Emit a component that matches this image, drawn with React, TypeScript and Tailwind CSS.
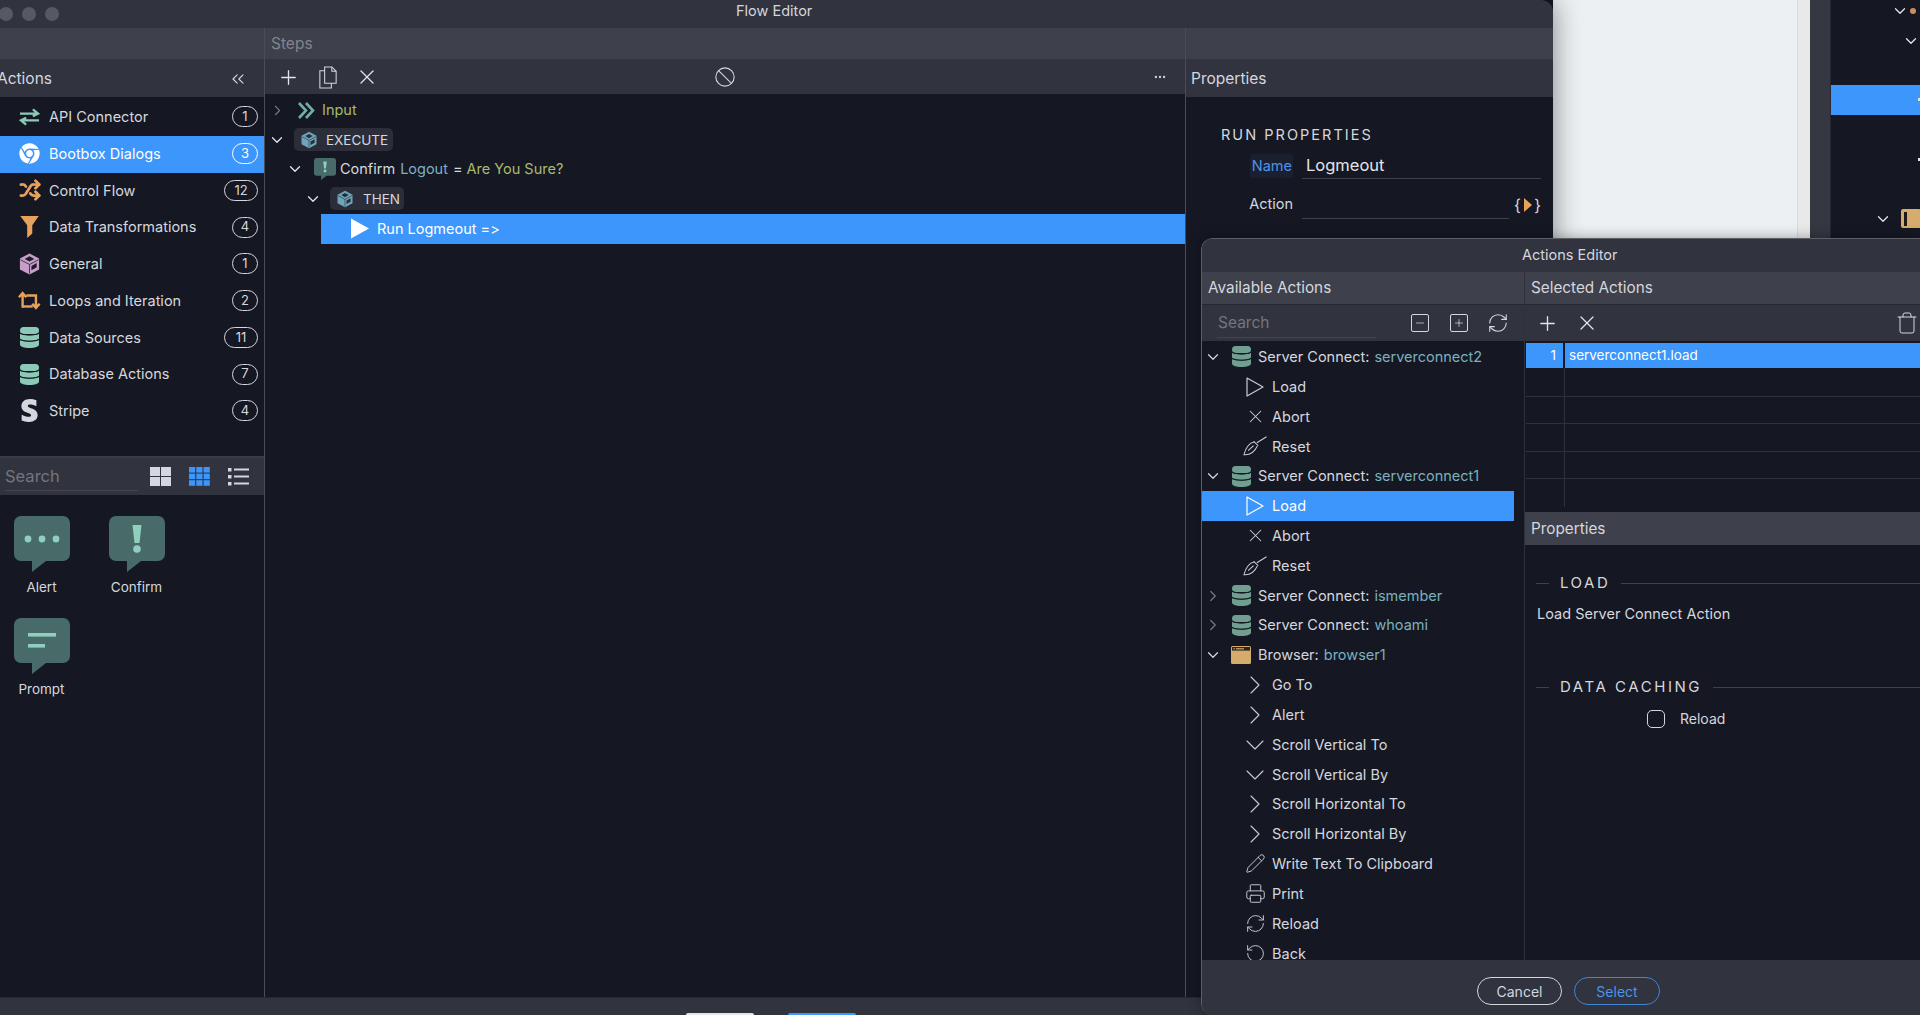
import { type ReactNode } from "react";
import {
  Ban,
  ChevronDown,
  ChevronRight,
  ChevronsLeft,
  Ellipsis,
  Minus,
  Pencil,
  Plus,
  Printer,
  RefreshCw,
  RotateCcw,
  Shuffle,
  Trash,
  X,
} from "lucide-react";
import { FaChrome, FaStripeS } from "react-icons/fa";

function Db({ color = "#8cc9b7" }: { color?: string }) {
  return (
    <svg viewBox="0 0 19 21" className="h-[21px] w-[19px]" fill={color}>
      <rect x="0" y="0" width="19" height="7" rx="3.5" />
      <path d="M0 6.8C3 9 16 9 19 6.8V11C19 13 15 14 9.5 14 4 14 0 13 0 11Z" />
      <path d="M0 13C3 15.2 16 15.2 19 13V17.5C19 19.8 15 21 9.5 21 4 21 0 19.8 0 17.5Z" />
      <path d="M0 6.2C3 8.4 16 8.4 19 6.2M0 12.4C3 14.6 16 14.6 19 12.4" fill="none" stroke="#151823" strokeWidth="1" />
    </svg>
  );
}

function Cube({ color, dark, className }: { color: string; dark: string; className: string }) {
  return (
    <svg viewBox="0 0 24 24" className={className}>
      <path d="M12 1 22 6.2V17.8L12 23 2 17.8V6.2Z" fill={color} />
      <path d="M12 4 17 6.8 12 9.5 7 6.8Z" fill={dark} />
      <path d="M12 12.5V22M12 12.5 21.5 7.5M12 12.5 2.5 7.5" stroke={dark} strokeWidth="0.8" fill="none" />
      <path d="M14 14 19.5 11V15.5L14 18.5Z" fill={dark} />
    </svg>
  );
}

function Funnel() {
  return (
    <svg viewBox="0 0 22 26" className="h-[24px] w-[21px]" fill="#e8a15b">
      <path d="M1 1H21L14 11V20L8.5 25V11Z" />
    </svg>
  );
}

function Swap() {
  return (
    <svg viewBox="0 0 22 18" className="h-[18px] w-[21px]" fill="none" stroke="#8cc9b7" strokeWidth="2.5">
      <path d="M1 5.5H20M14.5 1 20 5.5 14.5 8.2" />
      <path d="M21 12.5H2M7.5 9.8 2 12.5 7.5 17" />
    </svg>
  );
}

function Loop() {
  return (
    <svg viewBox="0 0 25 22" className="h-[21px] w-[25px]" fill="none" stroke="#e8a15b" strokeWidth="2.6">
      <path d="M5 19V3M1 7.5 5 3 9 7.5" />
      <path d="M9 5.5H19.5V19M15.5 14.5 19.5 19 23.5 14.5" />
      <path d="M5 17.5H16" />
    </svg>
  );
}

function Bubble({ kind, className }: { kind: "dots" | "bang" | "lines"; className: string }) {
  return (
    <svg viewBox="0 0 56 56" className={className}>
      <path
        d="M7 0H49a7 7 0 0 1 7 7V38a7 7 0 0 1-7 7H32L18 56V45H7a7 7 0 0 1-7-7V7a7 7 0 0 1 7-7Z"
        fill="#486a69"
      />
      {kind === "dots" && (
        <g fill="#8fcfbd">
          <circle cx="14" cy="23" r="3.4" />
          <circle cx="28" cy="23" r="3.4" />
          <circle cx="42" cy="23" r="3.4" />
        </g>
      )}
      {kind === "bang" && (
        <g fill="#8fcfbd">
          <path d="M23.5 9H32.5L30.5 27H25.5Z" />
          <circle cx="28" cy="33" r="3.8" />
        </g>
      )}
      {kind === "lines" && (
        <g fill="#8fcfbd">
          <rect x="14" y="15" width="28" height="3.6" />
          <rect x="14" y="26" width="17" height="3.6" />
        </g>
      )}
    </svg>
  );
}

function Brush() {
  return (
    <svg viewBox="0 0 26 21" className="h-[20px] w-[25px]" fill="none" stroke="#c9cbd2" strokeWidth="1.1">
      <path d="M25.5 0.5 15 7" />
      <path d="M11.5 5.5 16.5 10" />
      <path d="M12.5 6C7.5 7 3 12 1 20C7 20.5 12.5 17 15.5 10.5" />
      <path d="M11.5 10 5.5 15.5" />
    </svg>
  );
}

function Browser() {
  return (
    <svg viewBox="0 0 20 18" className="h-[18px] w-[20px]">
      <rect x="0" y="0" width="20" height="18" rx="1.5" fill="#d6ac6c" />
      <rect x="1" y="1" width="18" height="3.6" fill="#2a2622" />
      <rect x="2.5" y="2.2" width="1.4" height="1.2" fill="#d6ac6c" />
      <rect x="5" y="2.2" width="8" height="1.2" fill="#d6ac6c" />
    </svg>
  );
}

function Pages() {
  return (
    <svg viewBox="0 0 20 24" className="h-[23px] w-[20px]" fill="none" stroke="#d5d7de" strokeWidth="1.1">
      <path d="M6.5 1H14L18.5 5.5V18H6.5Z" />
      <path d="M14 1V5.5H18.5" />
      <path d="M6.5 5H1.5V23H13.5V18" />
    </svg>
  );
}

const thin = "h-[21px] w-[21px] text-[#c9cbd2]";
const bigRight = <ChevronRight className="h-[32px] w-[32px] shrink-0 text-[#c9cbd2]" strokeWidth={0.8} />;
const bigDown = <ChevronDown className="h-[32px] w-[32px] shrink-0 text-[#c9cbd2]" strokeWidth={0.8} />;

const categories: { name: string; count: number; icon: ReactNode; active?: boolean }[] = [
  { name: "API Connector", count: 1, icon: <Swap /> },
  { name: "Bootbox Dialogs", count: 3, icon: <FaChrome className="h-[21px] w-[21px] text-white" />, active: true },
  { name: "Control Flow", count: 12, icon: <Shuffle className="h-[22px] w-[22px] text-[#e8a15b]" strokeWidth={3} /> },
  { name: "Data Transformations", count: 4, icon: <Funnel /> },
  { name: "General", count: 1, icon: <Cube color="#c79ec9" dark="#1a1c27" className="h-[24px] w-[24px]" /> },
  { name: "Loops and Iteration", count: 2, icon: <Loop /> },
  { name: "Data Sources", count: 11, icon: <Db /> },
  { name: "Database Actions", count: 7, icon: <Db /> },
  { name: "Stripe", count: 4, icon: <FaStripeS className="h-[23px] w-[23px] text-[#d5d7de]" /> },
];

function CategoryRow({ name, count, icon, active }: (typeof categories)[number]) {
  return (
    <div className={`flex h-[36.75px] items-center pb-[1px] pl-[18px] pr-[6px] ${active ? "bg-[#3d96fb] text-white" : ""}`}>
      <span className="flex w-[23px] justify-center">{icon}</span>
      <span className="ml-[8px] flex-1">{name}</span>
      <span className={`flex h-[21px] items-center justify-center rounded-full border text-[13px] ${count > 9 ? "w-[34px]" : "w-[26px]"} ${active ? "border-white" : "border-[#d5d7de]"}`}>
        {count}
      </span>
    </div>
  );
}

function Tile({ label, kind }: { label: string; kind: "dots" | "bang" | "lines" }) {
  return (
    <div className="flex w-[95px] flex-col items-center">
      <Bubble kind={kind} className="h-[56px] w-[56px]" />
      <span className="mt-[6px] text-[13.5px] leading-[18px]">{label}</span>
    </div>
  );
}

function Head({ children, className = "" }: { children?: ReactNode; className?: string }) {
  return <div className={`flex h-[31px] shrink-0 items-center bg-[#3e404b] pt-[1px] text-[15.5px] ${className}`}>{children}</div>;
}

function ServerConnect({ name, open }: { name: string; open: boolean }) {
  return <TreeHead open={open} icon={<Db color="#709f92" />} label="Server Connect:" name={name} />;
}

function TreeHead({ open, icon, label, name }: { open: boolean; icon: ReactNode; label: string; name: string }) {
  return (
    <div className="flex h-[29.83px] items-center pl-[2px]">
      {open ? (
        <ChevronDown className="h-[18px] w-[18px] text-[#d5d7de]" strokeWidth={1.6} />
      ) : (
        <ChevronRight className="h-[18px] w-[18px] text-[#777983]" strokeWidth={1.6} />
      )}
      <span className="ml-[8px] flex w-[22px] justify-center">{icon}</span>
      <span className="ml-[6px]">{label}</span>
      <span className="ml-[5px] text-[#7cb0bd]">{name}</span>
    </div>
  );
}

function Leaf({ icon, label, active }: { icon: ReactNode; label: string; active?: boolean }) {
  return (
    <div className={`flex h-[29.83px] items-center pl-[41px] ${active ? "bg-[#3d96fb] text-white" : ""}`}>
      <span className="flex w-[24px] justify-center">{icon}</span>
      <span className="ml-[5px]">{label}</span>
    </div>
  );
}

function PlayOutline({ white }: { white?: boolean }) {
  return (
    <svg viewBox="0 0 18 20" className="h-[20px] w-[18px]" fill="none" stroke={white ? "#fff" : "#c9cbd2"} strokeWidth="1.2">
      <path d="M1 1 17 10 1 19Z" strokeLinejoin="round" />
    </svg>
  );
}

function SectionTitle({ title }: { title: string }) {
  return (
    <div className="flex items-center pl-[11px] text-[15px] leading-[20px] tracking-[0.17em] text-[#d5d7de]">
      <span className="h-px w-[13px] bg-[#3e404b]" />
      <span className="ml-[11px]">{title}</span>
      <span className="ml-[11px] h-px flex-1 bg-[#3e404b]" />
    </div>
  );
}

const sideRows = [
  { ml: 60, dot: true },
  { ml: 71 },
  {},
  { blue: true, speck: true },
  {},
  { speck: true },
  {},
  { ml: 43, box: true },
];

export default function App() {
  return (
    <div className="relative flex h-[1015px] w-[1920px] overflow-hidden bg-[#151823] text-[14.5px] text-[#d5d7de] [font-family:Inter,sans-serif] [font-feature-settings:'calt'_0]">
      {/* flow editor window */}
      <div className="z-10 flex h-full w-[1553px] shrink-0 flex-col overflow-hidden rounded-tr-xl bg-[#151823] shadow-[0_0_28px_rgba(0,0,0,0.45)]">
        <div className="flex h-[28px] shrink-0 items-center bg-[#31333e]">
          <div className="-ml-[1px] flex w-[60px] gap-[9px]">
            <span className="h-[14px] w-[14px] shrink-0 rounded-full bg-[#565862]" />
            <span className="h-[14px] w-[14px] shrink-0 rounded-full bg-[#565862]" />
            <span className="h-[14px] w-[14px] shrink-0 rounded-full bg-[#565862]" />
          </div>
          <span className="ml-[677px] -mt-[7px] text-[14.5px]">Flow Editor</span>
        </div>

        <div className="flex min-h-0 flex-1">
          {/* actions */}
          <div className="flex w-[265px] shrink-0 flex-col border-r border-[#4a4c56]">
            <Head />
            <div className="flex h-[38px] shrink-0 items-center justify-between bg-[#31333e] pr-[16px] pt-[1px] text-[15.5px]">
              <span className="-ml-[3px]">Actions</span>
              <ChevronsLeft className="h-[20px] w-[20px] text-[#d5d7de]" strokeWidth={1.4} />
            </div>
            <div className="pt-[2px]">
              {categories.map((c) => (
                <CategoryRow key={c.name} {...c} />
              ))}
            </div>
            <div className="mt-[26px] flex h-[39px] shrink-0 items-center border-t-2 border-[#3a3c46] bg-[#31333e] pl-[5px]">
              <span className="flex h-[30px] w-[133px] items-center border-b border-[#42444e] pt-[2px] text-[16.5px] text-[#74767f]">Search</span>
              <svg viewBox="0 0 21 19" className="ml-[12px] h-[19px] w-[21px]" fill="#d5d7de">
                <rect width="10" height="9" />
                <rect x="11" width="10" height="9" />
                <rect y="10" width="10" height="9" />
                <rect x="11" y="10" width="10" height="9" />
              </svg>
              <svg viewBox="0 0 21 19" className="ml-[18px] h-[19px] w-[21px]" fill="#3d96fb">
                {[0, 7.3, 14.6].map((x) =>
                  [0, 6.6, 13.2].map((y) => <rect key={`${x}-${y}`} x={x} y={y} width="6.2" height="5.6" />),
                )}
              </svg>
              <svg viewBox="0 0 21 19" className="ml-[18px] h-[19px] w-[21px]" fill="#d5d7de">
                <rect y="1" width="3.5" height="3.5" />
                <rect x="6" y="1.5" width="15" height="2" />
                <rect y="8" width="3.5" height="3.5" />
                <rect x="6" y="8.5" width="15" height="2" />
                <rect y="15" width="3.5" height="3.5" />
                <rect x="6" y="15.5" width="15" height="2" />
              </svg>
            </div>
            <div className="-ml-[6px] flex w-[210px] flex-wrap pt-[21px] text-[#d5d7de]">
              <Tile label="Alert" kind="dots" />
              <Tile label="Confirm" kind="bang" />
              <div className="mt-[22px]">
                <Tile label="Prompt" kind="lines" />
              </div>
            </div>
          </div>

          {/* steps */}
          <div className="flex w-[921px] shrink-0 flex-col border-r border-[#4a4c56]">
            <Head className="pl-[6px] text-[#82848d]">Steps</Head>
            <div className="flex h-[35px] shrink-0 items-center bg-[#31333e] pl-[12px] pr-[18px] pt-[1px]">
              <Plus className="h-[23px] w-[23px] text-[#e3e4e9]" strokeWidth={1.4} />
              <span className="ml-[18px] flex">
                <Pages />
              </span>
              <X className="ml-[17px] h-[24px] w-[24px] text-[#e3e4e9]" strokeWidth={1.3} />
              <Ban className="ml-[335px] h-[22px] w-[22px] text-[#d5d7de]" strokeWidth={1.2} />
              <Ellipsis className="ml-auto h-[14px] w-[14px] text-[#d5d7de]" />
            </div>
            <div className="pt-[1px]">
              <div className="flex h-[30px] items-center pl-[4px]">
                <ChevronRight className="h-[17px] w-[17px] text-[#777983]" strokeWidth={1.5} />
                <svg viewBox="0 0 17 17" className="ml-[12px] h-[17px] w-[17px]" fill="none" stroke="#6fb0a2" strokeWidth="2.6">
                  <path d="M1 1 8 8.5 1 16M8 1 15 8.5 8 16" />
                </svg>
                <span className="ml-[7px] text-[#a6b86e]">Input</span>
              </div>
              <div className="flex h-[29.5px] items-center pl-[3px]">
                <ChevronDown className="h-[18px] w-[18px] text-[#e3e4e9]" strokeWidth={1.7} />
                <span className="ml-[8px] flex h-[23px] w-[99px] items-center rounded-[5px] bg-[#2b2e39] pl-[6px] text-[13.5px]">
                  <Cube color="#6ea5bb" dark="#2b2e39" className="h-[18px] w-[18px]" />
                  <span className="ml-[8px]">EXECUTE</span>
                </span>
              </div>
              <div className="flex h-[29.5px] items-center pl-[21px]">
                <ChevronDown className="h-[18px] w-[18px] text-[#e3e4e9]" strokeWidth={1.7} />
                <Bubble kind="bang" className="ml-[10px] h-[22px] w-[22px]" />
                <span className="ml-[4px]">Confirm</span>
                <span className="ml-[5px] text-[#7cb0c4]">Logout</span>
                <span className="ml-[5px]">=</span>
                <span className="ml-[4px] text-[#abb96f]">Are You Sure?</span>
              </div>
              <div className="flex h-[29.5px] items-center pl-[39px]">
                <ChevronDown className="h-[18px] w-[18px] text-[#e3e4e9]" strokeWidth={1.7} />
                <span className="ml-[8px] flex h-[23px] w-[74px] items-center rounded-[5px] bg-[#2b2e39] pl-[6px] text-[13.5px]">
                  <Cube color="#6ea5bb" dark="#2b2e39" className="h-[18px] w-[18px]" />
                  <span className="ml-[9px]">THEN</span>
                </span>
              </div>
              <div className="ml-[56px] flex h-[30px] items-center bg-[#3d96fb] pl-[30px] text-white">
                <svg viewBox="0 0 18 20" className="h-[21px] w-[18px]" fill="#fff">
                  <path d="M0 0 18 10 0 20Z" />
                </svg>
                <span className="ml-[8px]">Run Logmeout =&gt;</span>
              </div>
            </div>
          </div>

          {/* properties */}
          <div className="flex min-w-0 flex-1 flex-col">
            <Head />
            <div className="flex h-[38px] shrink-0 items-center bg-[#31333e] pl-[5px] pt-[1px] text-[15.5px]">Properties</div>
            <div className="pl-[35px] pr-[12px] pt-[28px]">
              <div className="text-[14.5px] leading-[20px] tracking-[0.14em]">RUN PROPERTIES</div>
              <div className="mt-[7px] flex h-[27px] items-center">
                <span className="ml-[29px] flex h-[24px] w-[43px] items-center justify-end rounded-[2px] bg-[#1a2030] pr-[1px] text-[14.5px] text-[#4a94ea]">Name</span>
                <span className="ml-[9px] flex h-[27px] flex-1 items-center border-b border-[#3e404b] pl-[4px] text-[16.5px] text-[#e3e4e9]">Logmeout</span>
              </div>
              <div className="mt-[12px] flex h-[28px] items-center">
                <span className="ml-[27px] -mt-[2px] w-[45px] text-right text-[14.5px]">Action</span>
                <span className="ml-[9px] h-[28px] flex-1 border-b border-[#3e404b]" />
                <span className="ml-[5px] flex w-[27px] items-center justify-between text-[16px] leading-none">
                  {"{"}
                  <svg viewBox="0 0 8 14" className="h-[14px] w-[8px]" fill="#e8a15b">
                    <path d="M0 0 8 7 0 14Z" />
                  </svg>
                  {"}"}
                </span>
              </div>
            </div>
          </div>
        </div>

        <div className="flex h-[18px] shrink-0 items-end border-t border-[#262832] bg-[#31333e] pl-[686px]">
          <span className="h-[2px] w-[68px] rounded-t-sm bg-[#e3e4e9]" />
          <span className="ml-[34px] h-[2px] w-[68px] rounded-t-sm bg-[#3d96fb]" />
        </div>
      </div>

      {/* page behind the windows */}
      <div className="w-[244px] shrink-0 bg-[#ecf0f3]" />
      <div className="w-[13px] shrink-0 border-l border-[#d8dadb] bg-[#e9e9e9]" />
      <div className="w-[21px] shrink-0 border-r border-[#262832] bg-[#353741]" />
      <div className="-mt-[4px] flex min-w-0 flex-1 flex-col bg-[#151823]">
        {sideRows.map((r, i) => (
          <div key={i} className={`flex h-[29.7px] shrink-0 items-center ${r.blue ? "bg-[#3d96fb]" : ""}`}>
            {r.ml !== undefined && (
              <ChevronDown style={{ marginLeft: r.ml }} className="h-[18px] w-[18px] shrink-0 text-[#e3e4e9]" strokeWidth={1.7} />
            )}
            {r.dot && <span className="ml-[1px] h-[6px] w-[6px] shrink-0 rounded-full bg-[#c88f5a]" />}
            {r.box && (
              <span className="ml-[9px] flex h-[19px] w-[20px] shrink-0 items-center rounded-[2px] bg-[#d6ac6c] pl-[3px]">
                <span className="h-[14px] w-[3px] bg-[#1d1b19]" />
              </span>
            )}
            {r.speck && <span className="ml-auto h-[3px] w-[2px] shrink-0 bg-[#e3e4e9]" />}
          </div>
        ))}
      </div>

      {/* actions editor dialog */}
      <div className="absolute left-[1201px] top-[238px] z-20 flex h-[777px] w-[719px] flex-col overflow-hidden rounded-l-xl border-l border-t border-[#5c5e68] bg-[#151823] shadow-[0_0_14px_rgba(0,0,0,0.35)]">
        <div className="flex h-[33px] shrink-0 items-center bg-[#31333e] pb-[2px] pl-[320px] text-[14.5px]">Actions Editor</div>
        <div className="flex min-h-0 flex-1">
          <div className="flex w-[323px] shrink-0 flex-col border-r border-[#2e303a]">
            <div className="flex h-[33px] shrink-0 items-center border-b border-[#262832] bg-[#3e404b] pl-[6px] pt-[1px] text-[15.3px]">Available Actions</div>
            <div className="flex h-[36px] shrink-0 items-center bg-[#31333e] pl-[15px]">
              <span className="flex h-[30px] w-[159px] items-center border-b border-[#42444e] pl-[1px] text-[15.5px] text-[#74767f]">Search</span>
              <span className="ml-[35px] flex h-[18px] w-[18px] items-center justify-center rounded-[2px] border border-[#d5d7de]">
                <Minus className="h-[12px] w-[12px]" strokeWidth={1.5} />
              </span>
              <span className="ml-[21px] flex h-[18px] w-[18px] items-center justify-center rounded-[2px] border border-[#d5d7de]">
                <Plus className="h-[12px] w-[12px]" strokeWidth={1.5} />
              </span>
              <RefreshCw className="ml-[19px] h-[22px] w-[22px]" strokeWidth={1.2} />
            </div>
            <div className="min-h-0 flex-1 overflow-hidden pr-[10px] pt-[1px]">
              <ServerConnect name="serverconnect2" open />
              <Leaf icon={<PlayOutline />} label="Load" />
              <Leaf icon={<X className={thin} strokeWidth={1.2} />} label="Abort" />
              <Leaf icon={<Brush />} label="Reset" />
              <ServerConnect name="serverconnect1" open />
              <Leaf icon={<PlayOutline white />} label="Load" active />
              <Leaf icon={<X className={thin} strokeWidth={1.2} />} label="Abort" />
              <Leaf icon={<Brush />} label="Reset" />
              <ServerConnect name="ismember" open={false} />
              <ServerConnect name="whoami" open={false} />
              <TreeHead open icon={<Browser />} label="Browser:" name="browser1" />
              <Leaf icon={bigRight} label="Go To" />
              <Leaf icon={bigRight} label="Alert" />
              <Leaf icon={bigDown} label="Scroll Vertical To" />
              <Leaf icon={bigDown} label="Scroll Vertical By" />
              <Leaf icon={bigRight} label="Scroll Horizontal To" />
              <Leaf icon={bigRight} label="Scroll Horizontal By" />
              <Leaf icon={<Pencil className={thin} strokeWidth={1.1} />} label="Write Text To Clipboard" />
              <Leaf icon={<Printer className={thin} strokeWidth={1.1} />} label="Print" />
              <Leaf icon={<RefreshCw className={thin} strokeWidth={1.1} />} label="Reload" />
              <Leaf icon={<RotateCcw className={thin} strokeWidth={1.1} />} label="Back" />
            </div>
          </div>

          <div className="flex min-w-0 flex-1 flex-col">
            <div className="flex h-[33px] shrink-0 items-center border-b border-[#262832] bg-[#3e404b] pl-[6px] pt-[1px] text-[15.3px]">Selected Actions</div>
            <div className="flex h-[36px] shrink-0 items-center bg-[#31333e] pl-[11px] pr-[1px]">
              <Plus className="h-[23px] w-[23px] text-[#e3e4e9]" strokeWidth={1.4} />
              <X className="ml-[16px] h-[24px] w-[24px] text-[#e3e4e9]" strokeWidth={1.3} />
              <Trash className="ml-auto h-[24px] w-[24px]" strokeWidth={1} />
            </div>
            <div className="h-[171px] shrink-0 pl-[1px] pt-[2px]">
              <div className="flex h-[25px] items-center bg-[#3d96fb] text-[13.5px] text-white">
                <span className="w-[39px] border-r-2 border-[#151823] pr-[7px] text-right leading-[25px]">1</span>
                <span className="ml-[4px]">serverconnect1.load</span>
              </div>
              <div className="flex h-[29px] border-b border-[#2e303a]">
                <span className="w-[39px] border-r border-[#2e303a]" />
              </div>
              {[0, 1, 2, 3].map((i) => (
                <div key={i} className={`flex h-[27.4px] border-[#2e303a] ${i < 3 ? "border-b" : ""}`}>
                  <span className="w-[39px] border-r border-[#2e303a]" />
                </div>
              ))}
            </div>
            <div className="flex h-[33px] shrink-0 items-center bg-[#3e404b] pl-[6px] pt-[1px] text-[15.3px]">Properties</div>
            <div className="min-h-0 flex-1 pt-[28px]">
              <SectionTitle title="LOAD" />
              <p className="ml-[12px] mt-[11px] text-[14.5px] leading-[20px]">Load Server Connect Action</p>
              <div className="mt-[53px]">
                <SectionTitle title="DATA CACHING" />
              </div>
              <div className="mt-[11px] flex items-center pl-[122px]">
                <span className="h-[18px] w-[18px] rounded-[5px] border border-[#d5d7de]" />
                <span className="ml-[15px] text-[14px]">Reload</span>
              </div>
            </div>
          </div>
        </div>
        <div className="flex h-[55px] shrink-0 items-center bg-[#31333e] pl-[275px] pt-[7px]">
          <span className="flex h-[28px] w-[85px] items-center justify-center rounded-full border border-[#d5d7de] text-[14px]">Cancel</span>
          <span className="ml-[12px] flex h-[28px] w-[86px] items-center justify-center rounded-full border border-[#3d86d8] text-[14px] text-[#4a94ea]">Select</span>
        </div>
      </div>
    </div>
  );
}
